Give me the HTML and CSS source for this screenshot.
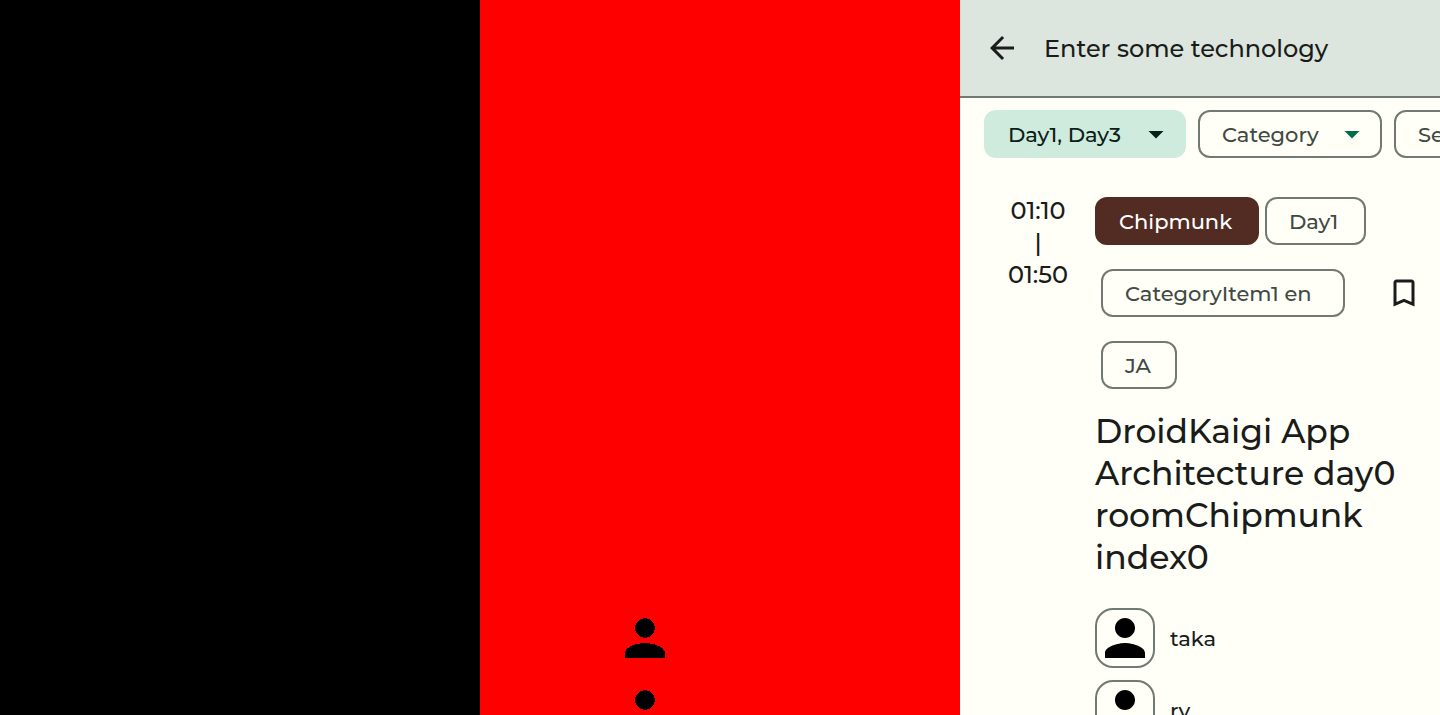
FILE: index.html
```html
<!DOCTYPE html>
<html lang="en">
<head>
<meta charset="utf-8">
<title>Search</title>
<link rel="stylesheet" href="styles.css">
</head>
<body>
<svg class="symbols" aria-hidden="true">
  <symbol id="person" viewBox="4 4 16 16"><path d="M12 12c2.21 0 4-1.79 4-4s-1.79-4-4-4-4 1.79-4 4 1.79 4 4 4zm0 2c-2.67 0-8 1.34-8 4v2h16v-2c0-2.66-5.33-4-8-4z"/></symbol>
  <symbol id="drop" viewBox="0 0 24 24"><path d="M7 10l5 5 5-5z"/></symbol>
</svg>
<div class="panes">
  <div class="pane pane-before"></div>
  <div class="pane pane-diff">
    <svg class="diff" viewBox="0 0 480 715" shape-rendering="crispEdges" aria-hidden="true">
      <use href="#person" x="145" y="618" width="40" height="40"/>
      <use href="#person" x="145" y="690" width="40" height="40"/>
    </svg>
  </div>
  <main class="pane screen">
    <header class="search">
      <button class="icon-button back" aria-label="Back">
        <svg class="icon" viewBox="0 0 24 24"><path d="M20 11H7.83l5.59-5.59L12 4l-8 8 8 8 1.41-1.41L7.83 13H20v-2z"/></svg>
      </button>
      <input class="search-input" type="text" aria-label="Search" placeholder="Enter some technology">
    </header>
    <div class="filters">
      <button class="chip filter filter-day selected">Day1, Day3<svg class="icon"><use href="#drop"/></svg></button>
      <button class="chip filter filter-category">Category<svg class="icon"><use href="#drop"/></svg></button>
      <button class="chip filter">Session Type<svg class="icon"><use href="#drop"/></svg></button>
    </div>
    <article class="session">
      <div class="time"><time>01:10</time><span>|</span><time>01:50</time></div>
      <div class="details">
        <div class="top">
          <div class="tags">
            <span class="chip tag room">Chipmunk</span>
            <span class="chip tag day">Day1</span>
            <span class="chip tag category">CategoryItem1 en</span>
            <span class="chip tag lang">JA</span>
          </div>
          <button class="icon-button bookmark" aria-label="Bookmark">
            <svg class="icon" viewBox="0 0 24 24"><path d="M17 3H7c-1.1 0-1.99.9-1.99 2L5 21l7-3 7 3V5c0-1.1-.9-2-2-2zm0 15l-5-2.18L7 18V5h10v13z"/></svg>
          </button>
        </div>
        <h1 class="title">DroidKaigi App Architecture day0 roomChipmunk index0</h1>
        <ul class="speakers">
          <li class="speaker"><span class="avatar"><svg class="person"><use href="#person"/></svg></span>taka</li>
          <li class="speaker"><span class="avatar"><svg class="person"><use href="#person"/></svg></span>ry</li>
        </ul>
      </div>
    </article>
  </main>
</div>
</body>
</html>
```
FILE: styles.css
```css
* { box-sizing: border-box; }

body {
  margin: 0;
  overflow: hidden;
  background: #fffff7;
  color: #191c1a;
  font-family: Montserrat, "DejaVu Sans", sans-serif;
  font-weight: 500;
}

button, input { font: inherit; color: inherit; }

.symbols { position: absolute; width: 0; height: 0; }

.panes {
  display: grid;
  grid-template-columns: repeat(3, minmax(0, 1fr));
  height: 100vh;
}

.pane { overflow: hidden; }
.pane-before { background: #000; }
.pane-diff { background: #f00; }
.diff { display: block; width: 100%; }
.screen { background: #fffff7; }

.icon { display: block; flex: none; width: 36px; height: 36px; fill: currentColor; }

.icon-button {
  display: flex;
  flex: none;
  align-items: center;
  justify-content: center;
  padding: 0;
  border: 0;
  background: none;
}

.search {
  display: flex;
  align-items: center;
  gap: 24px;
  height: 98px;
  padding-left: 24px;
  border-bottom: 2px solid #707973;
  background: #dde6de;
}

.search-input {
  flex: 1;
  min-width: 0;
  padding: 0;
  border: 0;
  outline: 0;
  background: none;
  font-size: 24px;
}

.search-input::placeholder { color: #191c1a; opacity: 1; }

.filters {
  display: flex;
  gap: 12px;
  padding: 12px 0 12px 24px;
}

.chip {
  display: flex;
  flex: none;
  align-items: center;
  height: 48px;
  padding: 0 22px;
  border: 2px solid #707973;
  border-radius: 12px;
  background: none;
  color: #404943;
  font-size: 21px;
  white-space: nowrap;
}

.filter { justify-content: space-between; gap: 8px; padding-right: 10px; }
.filter .icon { color: #006c4c; }
.filter-day { min-width: 202px; }
.filter-category { min-width: 184px; }

.selected { border-color: #cfebdd; background: #cfebdd; color: #092016; }
.selected .icon { color: #092016; }

.session { display: flex; gap: 3px; padding: 15px 0 0 24px; }

.time {
  display: flex;
  flex: none;
  flex-direction: column;
  align-items: center;
  width: 108px;
  padding-top: 10px;
  font-size: 24px;
  line-height: 32px;
}

.details { flex: 1; min-width: 0; }
.top { display: flex; }

.tags {
  display: flex;
  flex: 1;
  flex-wrap: wrap;
  gap: 24px 0;
  padding: 12px 0;
}

.tag { margin-left: 6px; }
.room { min-width: 164px; margin-left: 0; border-color: #522b22; background: #522b22; color: #fff; }
.day { min-width: 101px; }
.category { min-width: 244px; }
.lang { min-width: 76px; }

.bookmark { width: 72px; }

.title {
  margin: 0;
  padding: 9px 24px 30px 0;
  font-size: 33px;
  font-weight: 500;
  line-height: 42px;
}

.speakers {
  display: flex;
  flex-direction: column;
  gap: 12px;
  margin: 0;
  padding: 0;
  list-style: none;
}

.speaker { display: flex; align-items: center; gap: 15px; font-size: 21px; }

.avatar {
  display: flex;
  align-items: center;
  justify-content: center;
  width: 60px;
  height: 60px;
  border: 2px solid #707973;
  border-radius: 18px;
}

.person { width: 40px; height: 40px; fill: #000; }
```
